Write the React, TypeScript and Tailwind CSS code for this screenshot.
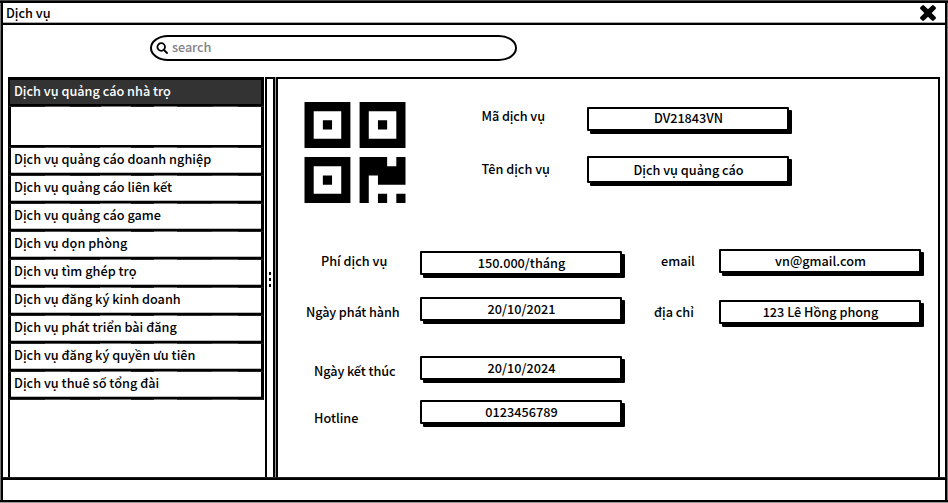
import React from "react";

const services = [
  "Dịch vụ quảng cáo doanh nghiệp",
  "Dịch vụ quảng cáo liên kết",
  "Dịch vụ quảng cáo game",
  "Dịch vụ dọn phòng",
  "Dịch vụ tìm ghép trọ",
  "Dịch vụ đăng ký kinh doanh",
  "Dịch vụ phát triển bài đăng",
  "Dịch vụ đăng ký quyền ưu tiên",
  "Dịch vụ thuê số tổng đài",
];

function Field({ value, className = "" }: { value: string; className?: string }) {
  return (
    <div
      className={
        "flex w-[202px] shrink-0 items-center justify-center rounded-[1px] border-2 border-black bg-white pl-px whitespace-nowrap shadow-[3px_3px_0_#000] " +
        className
      }
    >
      <span>{value}</span>
    </div>
  );
}

function Label({ text, className = "" }: { text: string; className?: string }) {
  return <div className={"shrink-0 whitespace-nowrap leading-5 " + className}>{text}</div>;
}

// Hand-inked edge: a one pixel strip whose darkness varies along its length.
function InkEdge() {
  return (
    <div className="h-px shrink-0 bg-[linear-gradient(90deg,#222_0_14%,#555_14%_24%,#222_24%_36%,#777_36%_48%,#222_48%_57%,#777_57%_66%,#333_66%_80%,#555_80%_90%,#222_90%)]" />
  );
}

function RowRule() {
  return (
    <div className="-mx-[2px] shrink-0">
      <div className="h-[2px] bg-black" />
      <InkEdge />
    </div>
  );
}

function QrIcon() {
  const finder = (x: number, y: number) => (
    <path
      fillRule="evenodd"
      d={`M${x} ${y}h5v5h-5z M${x + 1} ${y + 1}v3h3v-3z M${x + 2} ${y + 2}h1v1h-1z`}
    />
  );
  return (
    <svg className="ml-[26px] mt-[23px] mr-[0.5px] h-[101px] w-[102px] shrink-0" viewBox="-0.055 0 11.11 11" fill="#000">
      {finder(0, 0)}
      {finder(6, 0)}
      {finder(0, 6)}
      <path d="M6 6h3v1h1v-1h1v3h-3v-1h-1v3h-1z M8 10h1v1h-1z M10 10h1v1h-1z" />
    </svg>
  );
}

export default function App() {
  return (
    <div className="flex h-[503px] w-[948px] flex-col overflow-hidden bg-white font-['Noto_Sans_CJK_SC','Noto_Sans',sans-serif] text-[12.7px] font-medium leading-5 text-black">
      <div className="h-[3px] shrink-0 border-t border-[#444] bg-black" />
      <div className="flex min-h-0 flex-1 border-l border-r border-[#777]">
        <div className="flex min-w-0 flex-1 flex-col border-x-2 border-black">
          <header className="flex h-[19px] shrink-0 items-center justify-between pl-[3px] pr-[9px]">
            <span>Dịch vụ</span>
            <svg className="size-[16px]" viewBox="110 366 1188 1188" fill="#000">
              <path d="M1298 1322q0 40-28 68l-136 136q-28 28-68 28t-68-28L704 1232l-294 294q-28 28-68 28t-68-28l-136-136q-28-28-28-68t28-68l294-294-294-294q-28-28-28-68t28-68l136-136q28-28 68-28t68 28l294 294 294-294q28-28 68-28t68 28l136 136q28 28 28 68t-28 68l-294 294 294 294q28 28 28 68z" />
            </svg>
          </header>
          <div className="h-[3px] shrink-0 border-t border-[#aaa] bg-black" />

          <div className="flex h-[52px] shrink-0 pl-[147px] pt-[10px]">
            <div className="flex h-[26px] w-[367px] items-center rounded-[18px/13px] border-2 border-black pl-[4px]">
              <svg className="size-[12px]" viewBox="0 0 12 12" fill="none" stroke="#000" strokeWidth="1.8" strokeLinecap="round">
                <circle cx="5.2" cy="5" r="3.8" />
                <path d="M8 8L11 11" />
              </svg>
              <span className="ml-[4px] pb-[2px] tracking-[-0.1px] text-[#83838a]">search</span>
            </div>
          </div>

          <main className="flex min-h-0 flex-1 pl-[5px] pr-[5px]">
            <aside className="flex w-[259px] shrink-0 flex-col border-l-2 border-r-2 border-black">
              <div className="-ml-[1px] flex w-[255px] flex-1 flex-col">
                <div className="flex h-[29px] shrink-0 items-center border-t-3 border-b-2 border-r-3 border-l border-black bg-[#333] pl-[4px] pb-[2px] text-white">
                  Dịch vụ quảng cáo nhà trọ
                </div>
                <InkEdge />
                <div className="flex h-[41px] shrink-0 flex-col justify-end border-l-2 border-r-3 border-black">
                  <RowRule />
                </div>
                {services.map((s) => (
                  <div key={s} className="flex h-[28px] shrink-0 flex-col border-l-2 border-r-3 border-black">
                    <div className="flex h-[25px] items-center border-b border-[#bbb] pl-[3px] pb-[2px] tracking-[0.02px]">{s}</div>
                    <RowRule />
                  </div>
                ))}
              </div>
            </aside>
            <div className="flex w-[6px] shrink-0 flex-col items-center justify-center gap-[3px] border-t-2 border-black pt-[3px]">
              <i className="h-[3px] w-[2px] bg-black" />
              <i className="h-[3px] w-[2px] bg-black" />
              <i className="h-[3px] w-[2px] bg-black" />
            </div>
            <div className="w-[3px] shrink-0 border-l-2 border-r border-black border-r-[#999]" />

            <section className="flex min-w-0 flex-1 flex-col border-x-2 border-t-2 border-black">
              <div className="flex h-[160px] shrink-0">
                <QrIcon />
                <div className="ml-[75px] flex flex-col">
                  <div className="flex h-[77px] shrink-0">
                    <Label text="Mã dịch vụ" className="mt-[27px] w-[105.5px] tracking-[-0.1px]" />
                    <Field value="DV21843VN" className="mt-[28px] h-[24px] pb-[2px] tracking-[-0.05px]" />
                  </div>
                  <div className="flex">
                    <Label text="Tên dịch vụ" className="mt-[3px] w-[105.5px]" />
                    <Field value="Dịch vụ quảng cáo" className="h-[27px]" />
                  </div>
                </div>
              </div>
              <div className="flex flex-1">
                <div className="flex w-[345px] shrink-0 flex-col">
                  <div className="flex h-[58px]">
                    <Label text="Phí dịch vụ" className="ml-[43px] mt-[12px] w-[99px]" />
                    <Field value="150.000/tháng" className="mt-[12px] h-[24px]" />
                  </div>
                  <div className="flex h-[59px]">
                    <Label text="Ngày phát hành" className="ml-[28px] mt-[5px] w-[114px] tracking-[-0.13px]" />
                    <Field value="20/10/2021" className="h-[24px]" />
                  </div>
                  <div className="flex h-[44px]">
                    <Label text="Ngày kết thúc" className="ml-[36px] mt-[5px] w-[106px] tracking-[-0.1px]" />
                    <Field value="20/10/2024" className="h-[24px]" />
                  </div>
                  <div className="flex">
                    <Label text="Hotline" className="ml-[36px] mt-[8px] w-[106px]" />
                    <Field value="0123456789" className="h-[24px]" />
                  </div>
                </div>
                <div className="flex flex-col">
                  <div className="flex h-[61px]">
                    <Label text="email" className="ml-[38px] mt-[12px] w-[58px]" />
                    <Field value="vn@gmail.com" className="mt-[10px] h-[24px]" />
                  </div>
                  <div className="flex">
                    <Label text="địa chỉ" className="ml-[31px] mt-[2px] w-[65px]" />
                    <Field value="123 Lê Hồng phong" className="h-[24px]" />
                  </div>
                </div>
              </div>
            </section>
          </main>
          <div className="h-[3px] shrink-0 border-t border-[#222] bg-black" />
          <footer className="h-[20px] shrink-0" />
        </div>
      </div>
      <div className="h-[3px] shrink-0 border-b border-[#999] bg-black" />
    </div>
  );
}
